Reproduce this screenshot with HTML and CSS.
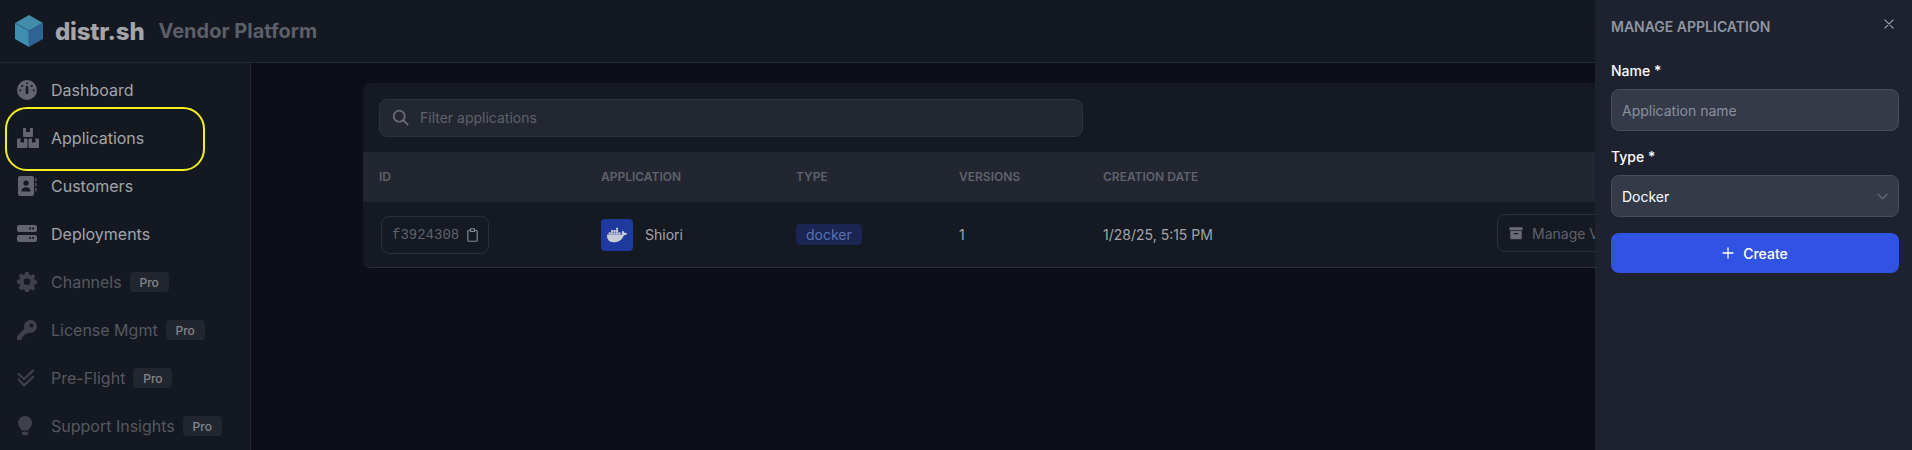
FILE: index.html
```html
<!DOCTYPE html>
<html lang="en">
<head>
  <meta charset="UTF-8" />
  <title>distr.sh Vendor Platform</title>
  <link rel="stylesheet" href="styles.css">
</head>
<body>

<header class="topbar">
  <svg class="logo" viewBox="0 0 30 34" width="30" height="34">
    <path d="M15 1 L29 9 L15 17 L1 9 Z" fill="#428ca9"/>
    <path d="M1 9 L15 17 L15 33 L1 25 Z" fill="#3f8fb0"/>
    <path d="M29 9 L15 17 L15 33 L29 25 Z" fill="#2f6295"/>
    <path d="M1 9 L15 17 L29 9 M15 17 V33" fill="none" stroke="#2b5f85" stroke-width="0.8"/>
  </svg>
  <span class="brand">distr.sh</span>
  <span class="brand-sub">Vendor Platform</span>
</header>

<div class="layout">
  <nav class="sidebar">
    <a class="nav-item">
      <svg class="nav-icon" viewBox="0 0 20 20"><path fill-rule="evenodd" d="M10 0a10 10 0 1 0 0 20 10 10 0 0 0 0-20Zm-.9 3.2a.9.9 0 1 1 1.800 0 .9.9 0 0 1-1.800 0ZM4.200 6a1 1 0 1 1 2 0 1 1 0 0 1-2 0Zm9.600 0a1 1 0 1 1 2 0 1 1 0 0 1-2 0ZM2.300 10.500a1 1 0 1 1 2 0 1 1 0 0 1-2 0Zm13.400 0a1 1 0 1 1 2 0 1 1 0 0 1-2 0ZM8.900 6h2.200l.4 6.600a1.500 1.500 0 0 1-3 0Z"/></svg>
      <span>Dashboard</span>
    </a>
    <a class="nav-item">
      <svg class="nav-icon nav-icon-wide" viewBox="0 0 22 20"><path d="M6 1a1 1 0 0 1 1-1h2v3.500a.5.5 0 0 0 .5.500h3a.5.5 0 0 0 .5-.500V0h2a1 1 0 0 1 1 1v7a1 1 0 0 1-1 1H7a1 1 0 0 1-1-1ZM0 11.500a1 1 0 0 1 1-1h2.500V14a.5.5 0 0 0 .5.500h2.500A.5.5 0 0 0 7 14v-3.500h2.500a1 1 0 0 1 1 1V19a1 1 0 0 1-1 1H1a1 1 0 0 1-1-1Zm11.500 0a1 1 0 0 1 1-1H15V14a.5.5 0 0 0 .5.500H18a.5.5 0 0 0 .5-.500v-3.500H21a1 1 0 0 1 1 1V19a1 1 0 0 1-1 1h-8.500a1 1 0 0 1-1-1Z"/></svg>
      <span>Applications</span>
    </a>
    <a class="nav-item">
      <svg class="nav-icon" viewBox="0 0 20 20"><path fill-rule="evenodd" d="M3 0h12a2 2 0 0 1 2 2v16a2 2 0 0 1-2 2H3a2 2 0 0 1-2-2V2a2 2 0 0 1 2-2Zm6 4.500a2.600 2.600 0 1 0 0 5.200 2.600 2.600 0 0 0 0-5.200ZM4.500 15c0-2 1.600-3.800 4.500-3.800s4.500 1.800 4.500 3.800a.6.6 0 0 1-.6.600H5.100a.6.6 0 0 1-.6-.600Z"/><path d="M18.300 2h1.200v3.500h-1.200Zm0 5h1.200v3.500h-1.200Zm0 5h1.200v3.500h-1.200Z"/></svg>
      <span>Customers</span>
    </a>
    <a class="nav-item">
      <svg class="nav-icon" viewBox="0 0 20 20"><path fill-rule="evenodd" d="M2 1h16a2 2 0 0 1 2 2v3a2 2 0 0 1-2 2H2a2 2 0 0 1-2-2V3a2 2 0 0 1 2-2Zm12 3.500a1 1 0 1 0 0 .01Zm3 0a1 1 0 1 0 0 .01ZM2 11h16a2 2 0 0 1 2 2v3a2 2 0 0 1-2 2H2a2 2 0 0 1-2-2v-3a2 2 0 0 1 2-2Zm12 3a1 1 0 1 0 0 .01Zm3 0a1 1 0 1 0 0 .01Z"/></svg>
      <span>Deployments</span>
    </a>
    <a class="nav-item pro">
      <svg class="nav-icon" viewBox="0 0 20 20"><path fill-rule="evenodd" d="M8.300 0h3.400l.5 2.700 1.500.7 2.300-1.500 2.400 2.400-1.500 2.300.7 1.500 2.700.5v3.400l-2.700.5-.7 1.500 1.500 2.300-2.400 2.400-2.300-1.500-1.500.7-.5 2.700H8.300l-.5-2.700-1.500-.7L4 18.200l-2.400-2.400 1.500-2.300-.7-1.500L-.3 11.500V8.100L2.400 7.600l.7-1.500L1.600 3.800 4 1.400l2.300 1.500 1.500-.7ZM10 6.500a3.300 3.300 0 1 0 0 6.600 3.300 3.300 0 0 0 0-6.600Z"/></svg>
      <span>Channels</span><span class="pro-tag">Pro</span>
    </a>
    <a class="nav-item pro">
      <svg class="nav-icon" viewBox="0 0 20 20"><path fill-rule="evenodd" d="M13.500 0a6.500 6.500 0 1 1-2.300 12.600L9.500 14.300H7.300v2.200H5.100v2.200l-1.300 1.300H1.500A1.500 1.500 0 0 1 0 18.500v-2.200l7.400-7.500A6.500 6.500 0 0 1 13.500 0Zm1 3.500a2 2 0 1 0 0 4 2 2 0 0 0 0-4Z"/></svg>
      <span>License Mgmt</span><span class="pro-tag">Pro</span>
    </a>
    <a class="nav-item pro">
      <svg class="nav-icon" viewBox="0 0 20 20"><path class="stroke" d="M1.500 6 7 11l9-8.400M1.500 11.300 7 17.400l9-8.400" stroke-width="2.200" stroke-linecap="round" stroke-linejoin="round"/></svg>
      <span>Pre-Flight</span><span class="pro-tag">Pro</span>
    </a>
    <a class="nav-item pro">
      <svg class="nav-icon" viewBox="0 0 20 20"><path d="M8 0c-4 0-7 3-7 6.800 0 2.300 1 3.800 2.200 5.200.7.800 1.100 1.500 1.300 2.500h7c.2-1 .6-1.700 1.300-2.500C13.900 10.600 15 9.100 15 6.800 15 3 12 0 8 0ZM4.800 15.800h6.400v1.400a2 2 0 0 1-2 2H6.800a2 2 0 0 1-2-2Z"/></svg>
      <span>Support Insights</span><span class="pro-tag">Pro</span>
    </a>
    <div class="highlight"></div>
  </nav>

  <main class="content">
    <section class="card">
      <div class="filter-row">
        <label class="filter">
          <svg class="filter-icon" viewBox="0 0 20 20" fill="none"><circle cx="8.500" cy="8.500" r="6.500" stroke-width="2"/><path d="m13.500 13.500 5 5" stroke-width="2" stroke-linecap="round"/></svg>
          <input type="text" placeholder="Filter applications">
        </label>
      </div>
      <table class="apps">
        <colgroup>
          <col class="col-id"><col class="col-app"><col class="col-type"><col class="col-ver"><col class="col-date"><col>
        </colgroup>
        <thead>
          <tr><th>ID</th><th>Application</th><th>Type</th><th>Versions</th><th>Creation date</th><th></th></tr>
        </thead>
        <tbody>
          <tr>
            <td>
              <span class="uuid">f3924308
                <svg viewBox="0 0 14 18" width="11" height="14" fill="none"><path d="M3.500 3H2.300A1.300 1.300 0 0 0 1 4.300v11.400A1.300 1.300 0 0 0 2.300 17h9.400a1.300 1.300 0 0 0 1.300-1.300V4.300A1.300 1.300 0 0 0 11.700 3h-1.200M4.500 1h5v3.500h-5Z" stroke="#858891" stroke-width="1.500"/></svg>
              </span>
            </td>
            <td>
              <div class="app-cell">
                <span class="app-logo">
                  <svg viewBox="0 0 24 24" width="20" height="20"><path fill="#c8ccd6" d="M13.983 11.078h2.119a.186.186 0 00.186-.185V9.006a.186.186 0 00-.186-.186h-2.119a.185.185 0 00-.185.185v1.888c0 .102.083.185.185.185m-2.954-5.430h2.118a.186.186 0 00.186-.186V3.574a.186.186 0 00-.186-.185h-2.118a.185.185 0 00-.185.185v1.888c0 .102.082.185.185.186m0 2.716h2.118a.187.187 0 00.186-.186V6.290a.186.186 0 00-.186-.185h-2.118a.185.185 0 00-.185.185v1.887c0 .102.082.185.185.186m-2.930 0h2.120a.186.186 0 00.184-.186V6.290a.185.185 0 00-.185-.185H8.100a.185.185 0 00-.185.185v1.887c0 .102.083.185.185.186m-2.964 0h2.119a.186.186 0 00.185-.186V6.290a.185.185 0 00-.185-.185H5.136a.186.186 0 00-.186.185v1.887c0 .102.084.185.186.186m5.893 2.715h2.118a.186.186 0 00.186-.185V9.006a.186.186 0 00-.186-.186h-2.118a.185.185 0 00-.185.185v1.888c0 .102.082.185.185.185m-2.930 0h2.120a.185.185 0 00.184-.185V9.006a.185.185 0 00-.184-.186h-2.120a.185.185 0 00-.184.185v1.888c0 .102.083.185.185.185m-2.964 0h2.119a.185.185 0 00.185-.185V9.006a.185.185 0 00-.184-.186h-2.120a.186.186 0 00-.186.186v1.887c0 .102.084.185.186.185m-2.920 0h2.120a.185.185 0 00.184-.185V9.006a.185.185 0 00-.184-.186h-2.120a.185.185 0 00-.184.185v1.888c0 .102.082.185.185.185M23.763 9.890c-.065-.051-.672-.51-1.954-.51-.338.001-.676.03-1.010.087-.248-1.700-1.653-2.530-1.716-2.566l-.344-.199-.226.327c-.284.438-.490.922-.612 1.430-.230.970-.090 1.882.403 2.661-.595.332-1.550.413-1.744.420H.751a.751.751 0 00-.750.748 11.376 11.376 0 00.692 4.062c.545 1.428 1.355 2.480 2.410 3.124 1.180.723 3.100 1.137 5.275 1.137.983.003 1.963-.086 2.930-.266a12.248 12.248 0 003.823-1.389c.980-.567 1.860-1.288 2.610-2.136 1.252-1.418 1.998-2.997 2.553-4.400h.221c1.372 0 2.215-.549 2.680-1.009.309-.293.550-.650.707-1.046l.098-.288Z"/></svg>
                </span>
                <span>Shiori</span>
              </div>
            </td>
            <td><span class="type-badge">docker</span></td>
            <td>1</td>
            <td>1/28/25, 5:15 PM</td>
            <td class="actions">
              <button class="manage-btn" type="button">
                <svg viewBox="0 0 16 16" width="14" height="14"><path fill="#6a6d75" d="M1 1.500h14a.5.5 0 0 1 .5.5v2.500H.5V2a.5.5 0 0 1 .5-.5ZM1.500 5.500h13V14a1 1 0 0 1-1 1h-11a1 1 0 0 1-1-1Zm4 2.500v1.300h5V8Z" fill-rule="evenodd"/></svg>
                Manage Versions
              </button>
            </td>
          </tr>
        </tbody>
      </table>
    </section>
  </main>
</div>

<aside class="drawer">
  <div class="drawer-head">
    <h3>Manage Application</h3>
    <svg class="close" viewBox="0 0 12 12" width="10" height="10" fill="none"><path d="M1 1l10 10M11 1 1 11" stroke="#9ca3af" stroke-width="1.400" stroke-linecap="round"/></svg>
  </div>
  <form class="drawer-form">
    <div class="field">
      <label for="appName">Name *</label>
      <input id="appName" type="text" placeholder="Application name">
    </div>
    <div class="field">
      <label for="appType">Type *</label>
      <div class="select" id="appType">
        <span>Docker</span>
        <svg viewBox="0 0 12 8" width="11" height="7" fill="none"><path d="m1 1.500 5 5 5-5" stroke="#5f6572" stroke-width="1.800" stroke-linecap="round" stroke-linejoin="round"/></svg>
      </div>
    </div>
    <button class="create-btn" type="button">
      <svg viewBox="0 0 12 12" width="12" height="12" fill="none"><path d="M6 1v10M1 6h10" stroke="#fff" stroke-width="1.300" stroke-linecap="round"/></svg>
      Create
    </button>
  </form>
</aside>

</body>
</html>
```

FILE: styles.css
```css
* { box-sizing: border-box; }
html, body { height: 100%; }
body {
  margin: 0; overflow: hidden; background: #0c0f17; color: #a3a5aa;
  font-family: Inter, "Liberation Sans", sans-serif; font-size: 14px;
}

.topbar {
  height: 63px; display: flex; align-items: center; padding: 0 0 0 14px;
  background: #141821; border-bottom: 1px solid #23272f;
}
.logo { margin-right: 11px; }
.brand { font-size: 24px; font-weight: 800; letter-spacing: -0.2px; color: #a3a5aa; margin-right: 14px; }
.brand-sub { font-size: 20px; font-weight: 700; color: #5c5f67; }

.layout { display: flex; height: 387px; }

.sidebar {
  position: relative; width: 251px; flex: none; padding: 3px 0 0 17px;
  background: #141821; border-right: 1px solid #23272f;
}
.nav-item {
  height: 48px; display: flex; align-items: center; gap: 8px;
  font-size: 16px; color: #a3a5aa;
}
.nav-icon { width: 20px; height: 20px; margin-right: 6px; fill: #62656d; flex: none; }
.nav-icon-wide { width: 22px; margin-right: 4px; }
.nav-icon .stroke { fill: none; stroke: #3e4149; }
.nav-item.pro { color: #55585f; }
.nav-item.pro .nav-icon { fill: #3e4149; }
.pro-tag {
  width: 39px; height: 20px; display: flex; align-items: center; justify-content: center;
  border-radius: 4px; font-size: 12px; font-weight: 500;
  background: #22262f; color: #85878d;
}
.highlight {
  position: absolute; left: 5px; top: 44px; width: 200px; height: 64px;
  border: 2px solid #f5f020; border-radius: 22px;
}

.content { flex: 1; padding: 20px 112px 0; }
.card { height: 185px; background: #141922; border-radius: 8px; border-bottom: 1px solid #2b2f38; overflow: hidden; }
.filter-row { height: 69px; padding: 16px; }
.filter {
  width: 704px; height: 38px; display: flex; align-items: center; gap: 11px; padding: 0 12px 1px;
  background: #232731; border: 1px solid #2e323c; border-radius: 8px;
}
.filter-icon { width: 17px; height: 17px; stroke: #6b6e76; flex: none; }
.filter input {
  flex: 1; background: none; border: none; outline: none; padding: 0;
  font: inherit; color: #a3a5aa;
}
.filter input::placeholder { color: #5f626a; }

.apps { width: 100%; border-collapse: collapse; table-layout: fixed; }
.col-id { width: 222px; }
.col-app { width: 195px; }
.col-type { width: 163px; }
.col-ver { width: 144px; }
.col-date { width: 394px; }
.apps th {
  height: 50px; padding: 0 16px 1px; text-align: left; background: #222630;
  font-size: 12px; font-weight: 600; text-transform: uppercase; color: #5f626a;
}
.apps td { height: 66px; padding: 0 16px 1px; color: #a3a5aa; }
.uuid {
  display: inline-flex; align-items: center; gap: 8px; height: 38px; padding: 0 10px;
  margin-left: 2px; border: 1px solid #2b2f38; border-radius: 8px;
  font-family: "Liberation Mono", monospace; font-size: 14px; color: #5f626a;
}
.app-cell { display: flex; align-items: center; gap: 12px; }
.app-logo {
  width: 32px; height: 32px; display: flex; align-items: center; justify-content: center;
  background: #1e3a9f; border-radius: 4px;
}
.type-badge {
  display: inline-block; padding: 2px 10px; border-radius: 4px;
  background: #1a2553; color: #5773b3;
}
.apps td.actions { padding-bottom: 4px; }
.manage-btn {
  display: inline-flex; align-items: center; gap: 9px; height: 38px; padding: 0 11px;
  background: none; border: 1px solid #2b2f38; border-radius: 8px; white-space: nowrap;
  font: inherit; color: #5f626a;
}

.drawer {
  position: absolute; top: 0; right: 0; bottom: 0; width: 317px; padding: 0 13px 0 16px;
  background: #1d222e; color: #fff;
}
.drawer-head { height: 61px; display: flex; justify-content: space-between; padding-top: 19px; }
.drawer-head h3 {
  margin: 0; font-size: 14px; line-height: 16px; font-weight: 600; text-transform: uppercase;
  color: #8f95a1;
}
.close { margin: 0 5px 0 0; }
.drawer-form { display: flex; flex-direction: column; }
.field { margin-bottom: 16px; }
.field label { display: block; margin-bottom: 8px; font-weight: 500; line-height: 20px; color: #fff; font-size: 14px; }
.field input, .select {
  width: 100%; height: 42px; padding: 0 10px; background: #343a48;
  border: 1px solid #464c5a; border-radius: 8px; font: inherit; color: #fff; outline: none;
}
.field input::placeholder { color: #8a909c; }
.select { display: flex; align-items: center; justify-content: space-between; }
.create-btn {
  height: 40px; display: flex; align-items: center; justify-content: center; gap: 9px;
  background: #3053e4; border: none; border-radius: 8px;
  font: inherit; font-weight: 500; color: #fff;
}
```
